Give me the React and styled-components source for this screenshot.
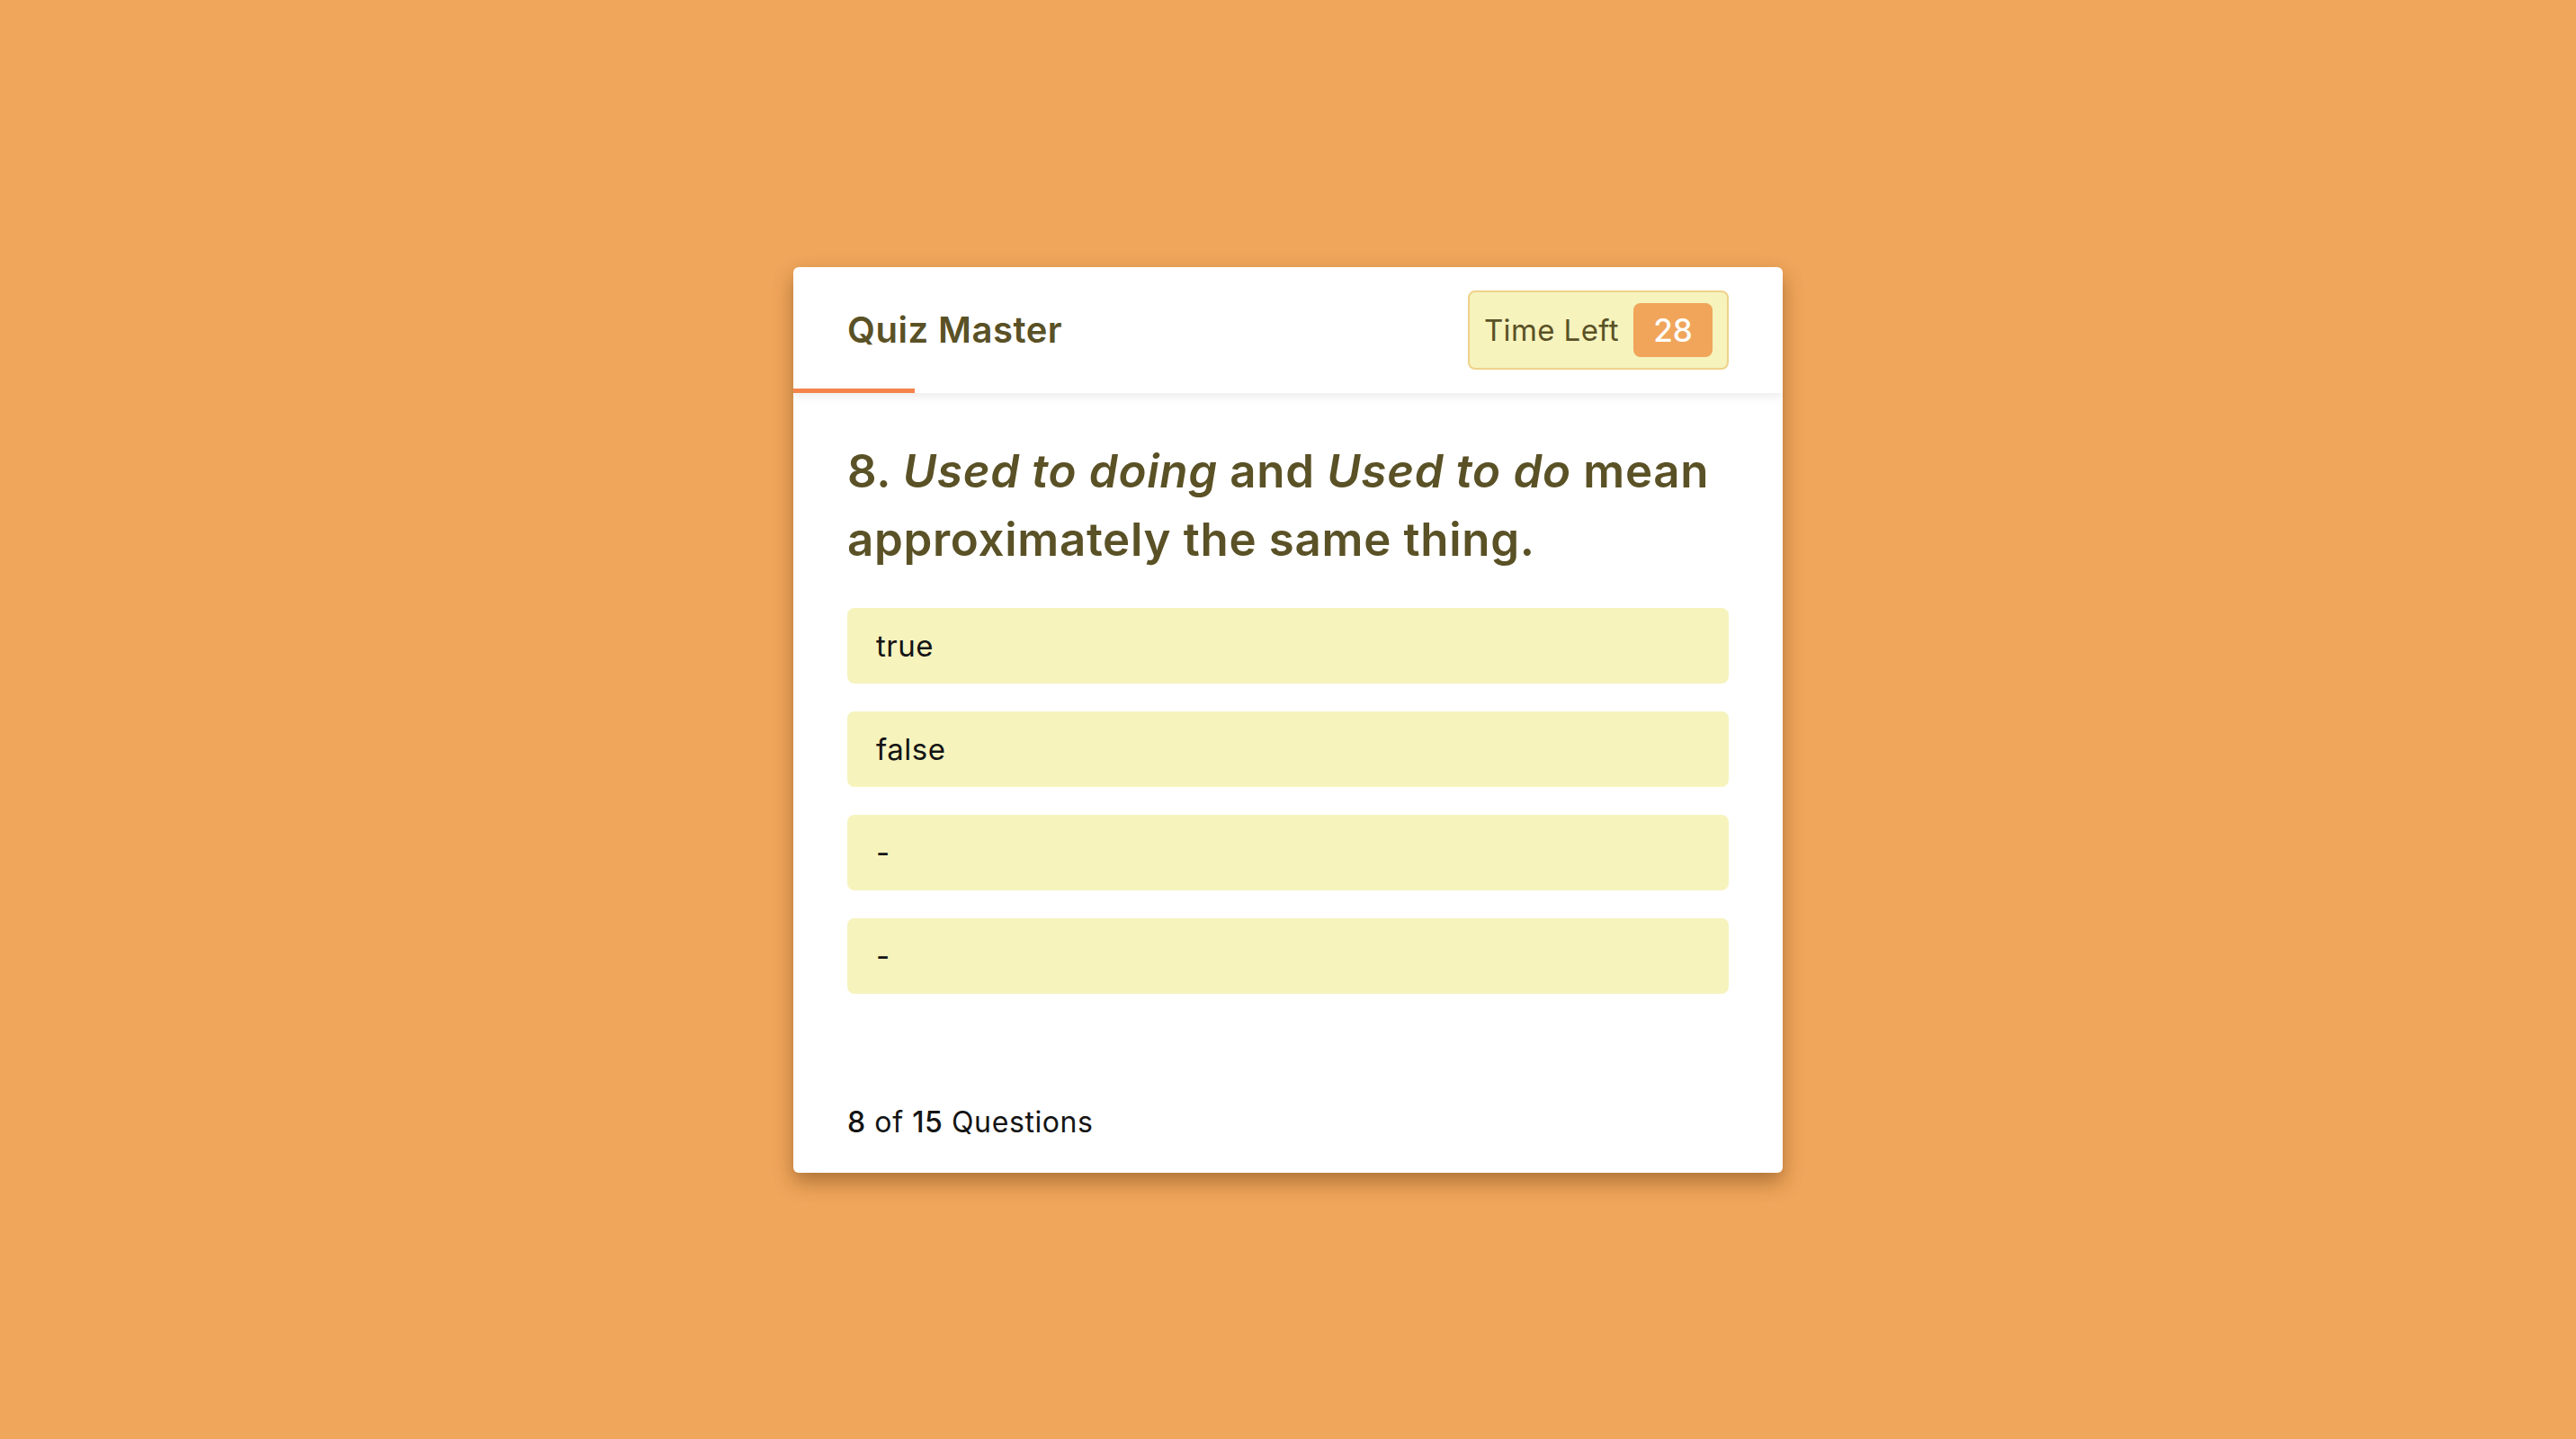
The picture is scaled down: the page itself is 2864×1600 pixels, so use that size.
import React from "react";
import styled, { createGlobalStyle } from "styled-components";

const quiz = {
  title: "Quiz Master",
  timeLeft: 28,
  timeTotal: 30,
  number: 8,
  total: 15,
  options: ["true", "false", "-", "-"],
};

const GlobalStyle = createGlobalStyle`
  html, body {
    margin: 0;
    padding: 0;
  }
  body {
    background: #f0a65b;
    font-family: Inter, "Noto Sans", sans-serif;
  }
`;

const Page = styled.div`
  min-height: 100vh;
  display: flex;
  align-items: center;
  justify-content: center;
`;

const Card = styled.div`
  width: 1100px;
  background: #fff;
  border-radius: 6px;
  box-shadow: 0 10px 22px rgba(90, 50, 10, 0.45);
  overflow: hidden;
`;

const Header = styled.header`
  position: relative;
  height: 140px;
  padding: 0 60px;
  display: flex;
  align-items: center;
  justify-content: space-between;
  box-shadow: 0 4px 10px rgba(0, 0, 0, 0.08);
`;

const Title = styled.h1`
  margin: 0;
  font-size: 40px;
  font-weight: 600;
  color: #5a5126;
  letter-spacing: 0.5px;
`;

const Progress = styled.div`
  position: absolute;
  left: 0;
  bottom: 0;
  height: 5px;
  background: #f4844b;
`;

const Timer = styled.div`
  display: flex;
  align-items: center;
  gap: 16px;
  height: 88px;
  padding: 0 16px;
  box-sizing: border-box;
  background: #f6f3bd;
  border: 2px solid #efd28a;
  border-radius: 8px;
`;

const TimerLabel = styled.span`
  font-size: 33px;
  color: #5a5126;
  letter-spacing: 0.4px;
`;

const TimerValue = styled.span`
  display: flex;
  align-items: center;
  justify-content: center;
  width: 88px;
  height: 60px;
  background: #f0a55a;
  border-radius: 8px;
  color: #fff;
  font-size: 35px;
  font-weight: 500;
`;

const Body = styled.div`
  padding: 49px 60px 33px;
`;

const Question = styled.h2`
  margin: 0 0 38px;
  font-size: 51px;
  line-height: 76px;
  font-weight: 600;
  color: #5a5126;
  letter-spacing: 0.7px;

  em {
    font-style: italic;
  }
`;

const Options = styled.ul`
  list-style: none;
  margin: 0 0 120px;
  padding: 0;
  display: flex;
  flex-direction: column;
  gap: 31px;
`;

const Option = styled.li`
  height: 84px;
  display: flex;
  align-items: center;
  padding: 0 32px;
  background: #f6f3bd;
  border-radius: 8px;
  font-size: 33px;
  letter-spacing: 0.5px;
  color: #141414;
`;

const Footer = styled.div`
  font-size: 32px;
  line-height: 46px;
  letter-spacing: 0.6px;
  color: #141414;

  b {
    font-weight: 500;
  }
`;

export default function App() {
  const { title, timeLeft, timeTotal, number, total, options } = quiz;

  return (
    <>
      <GlobalStyle />
      <Page>
        <Card>
          <Header>
            <Title>{title}</Title>
            <Timer>
              <TimerLabel>Time Left</TimerLabel>
              <TimerValue>{timeLeft}</TimerValue>
            </Timer>
            <Progress style={{ width: `${((timeTotal - timeLeft) / timeTotal) * 100 * 1.84}%` }} />
          </Header>
          <Body>
            <Question>
              {number}. <em>Used to doing</em> and <em>Used to do</em> mean approximately the same thing.
            </Question>
            <Options>
              {options.map((opt, i) => (
                <Option key={i}>{opt}</Option>
              ))}
            </Options>
            <Footer>
              <b>{number}</b> of <b>{total}</b> Questions
            </Footer>
          </Body>
        </Card>
      </Page>
    </>
  );
}
